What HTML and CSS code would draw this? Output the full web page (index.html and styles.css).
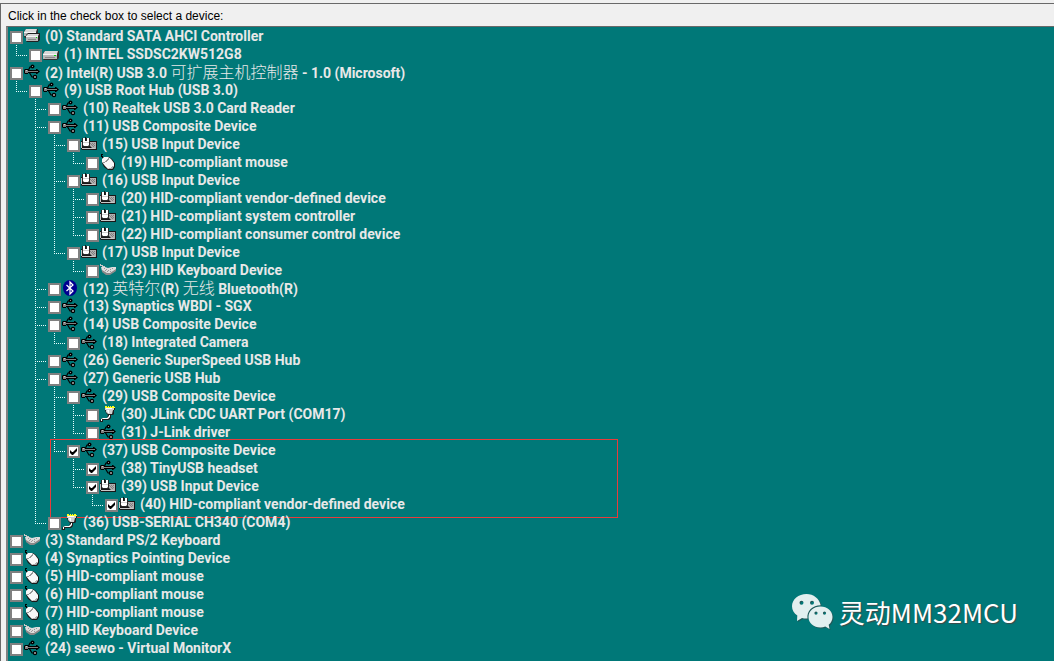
FILE: index.html
```html
<!DOCTYPE html>
<html lang="en">
<head>
<meta charset="utf-8">
<title>Select a device</title>
<link rel="stylesheet" href="styles.css">
</head>
<body>
<svg class="sprite" aria-hidden="true">
  <defs>
    <symbol id="usb" viewBox="0 0 16 16">
      <path d="M4 7L6 3H8M5 8L8 13H10" fill="none" stroke="#000" stroke-width="1.200"/>
      <path d="M1 5H4V6H12V5H13L16 7.500L13 10H12V9H4V10H1L0 9V6Z" fill="#000"/>
      <path d="M1 6H4V9H1ZM4 7H12V8H4ZM12 7H14V8H12Z" fill="#808080"/><path d="M2 6H3V7H2Z" fill="#c8c8c8"/>
      <circle cx="8.500" cy="2.500" r="2" fill="#000"/><path d="M8 2H9V3H8Z" fill="#909090"/>
      <circle cx="11" cy="13" r="2.200" fill="#000"/><path d="M10 12H12V14H10Z" fill="#808080"/>
    </symbol>
    <symbol id="disk" viewBox="0 0 16 16">
      <path d="M0 7L2 5H16V12L14 14H1L0 13Z" fill="#303030"/>
      <path d="M0 8L2 5H15L14 8Z" fill="#d8d8d8"/>
      <path d="M0 8H14V13H0Z" fill="#b8b8b8"/>
      <path d="M0 8H14V9H0Z" fill="#f4f4f4"/><path d="M2 11H12V12H2Z" fill="#888"/>
      <path d="M11 9H13V10H11Z" fill="#00e000"/>
    </symbol>
    <symbol id="disks" viewBox="0 0 16 16">
      <path d="M0 3L2 1H14V8L12 10H1L0 8Z" fill="#303030"/>
      <path d="M0 4L2 1H13L12 4Z" fill="#d8d8d8"/><path d="M0 4H12V8H0Z" fill="#b0b0b0"/><path d="M0 4H12V5H0Z" fill="#f4f4f4"/>
      <path d="M2 7L4 5H16V12L14 14H3L2 13Z" fill="#202020"/>
      <path d="M2 8L4 6H15L14 8Z" fill="#d8d8d8"/><path d="M2 8H14V13H2Z" fill="#b8b8b8"/>
      <path d="M2 8H14V9H2Z" fill="#f4f4f4"/><path d="M4 11H12V12H4Z" fill="#888"/><path d="M12 9H13V10H12Z" fill="#00e000"/>
    </symbol>
    <symbol id="hid" viewBox="0 0 16 16">
      <path d="M0 5H16V14H1L0 13Z" fill="#181818"/>
      <path d="M8 6H15V13H12L8 9Z" fill="#b0b0b0"/><path d="M1 12H14V13H1ZM0 6H1V12H0Z" fill="#c8c8c8"/>
      <path d="M9 7h1v1h-1zM11 7h1v1h-1zM13 7h1v1h-1zM10 8h1v1h-1zM12 8h1v1h-1zM11 9h1v1h-1zM13 9h1v1h-1zM12 10h1v1h-1z" fill="#808080"/>
      <path d="M1 2H9V9L8 11H3L1 9Z" fill="#282828"/>
      <path d="M2 2H4V5H6V2H8V9L7 10H3L2 9Z" fill="#fff"/>
      <path d="M4 1H5V5H4Z" fill="#181818"/><path d="M2 6H8V7H2Z" fill="#d0d0d0"/>
    </symbol>
    <symbol id="mouse" viewBox="0 0 16 16">
      <path d="M1 0H3V1H2V2H3V3H4V4H2V3H1Z" fill="#000"/>
      <path d="M2 5L4 3H9L12 5L15 9V13L13 16H8L4 13L2 9Z" fill="#181818"/>
      <path d="M2 5L4 3H8L11 5L14 9V12L12 15H8L5 12L2 8Z" fill="#f8f8f8"/>
      <path d="M3 8H5V7H6V6H7V5H8V4H9V6H8V7H7V8H5V9H3Z" fill="#989898"/>
      <path d="M8 14H11V13H12V12H14L12 15H9Z" fill="#b0b0b0"/>
    </symbol>
    <symbol id="keyboard" viewBox="0 0 16 16">
      <path d="M0 2H1V3H3V4H5V6H4V5H2V4H0Z" fill="#c8c8c8"/>
      <path d="M1 5H5L8 6L12 5H16V8L14 10L9 12H6L2 9Z" fill="#ddd"/>
      <path d="M2 8L7 11H10L16 7V9L10 13H6L2 10Z" fill="#888"/>
      <path d="M4 6h1v1h-1zM6 7h1v1h-1zM8 8h1v1h-1zM10 7h1v1h-1zM12 6h1v1h-1zM7 9h1v1h-1zM10 9h1v1h-1zM5 8h1v1h-1z" fill="#999"/>
    </symbol>
    <symbol id="serial" viewBox="0 0 16 16">
      <path d="M5 0h2v1h-2zM8 0h1v1h-1zM10 0h1v1h-1zM12 0h2v1h-2zM5 1h10v1h-10z" fill="#ffff20"/>
      <path d="M5 2H15V4H14V8L13 9H11V12L9 14H3V16H0V14L2 12H7L8 9L6 7L5 4Z" fill="#202020"/>
      <path d="M5 2H14V4H13L12 8H8L6 6V4H5Z" fill="#d0d0d0"/><path d="M6 2H12V3H6ZM7 4H9V7H8Z" fill="#fff"/>
      <path d="M9 9H10V11L8 13H2V15H1V13L3 12H7L9 10Z" fill="#fff"/>
    </symbol>
    <symbol id="bluetooth" viewBox="0 0 16 16">
      <ellipse cx="8" cy="8" rx="7" ry="8" fill="#000090"/>
      <path d="M4.500 5L11 11L8 14V2L11 5L4.500 11" fill="none" stroke="#fff" stroke-width="1.200"/>
    </symbol>
  </defs>
</svg>

<main class="panel">
  <h1 class="prompt">Click in the check box to select a device:</h1>
  <div class="tree">
    <ul class="roots">
      <li><label class="node"><input type="checkbox"><svg><use href="#disks"/></svg><span>(0) Standard SATA AHCI Controller</span></label>
        <ul>
          <li><label class="node"><input type="checkbox"><svg><use href="#disk"/></svg><span>(1) INTEL SSDSC2KW512G8</span></label></li>
        </ul>
      </li>
      <li><label class="node"><input type="checkbox"><svg><use href="#usb"/></svg><span>(2) Intel(R) USB 3.0 <span class="cjk" lang="zh">可扩展主机控制器</span> - 1.0 (Microsoft)</span></label>
        <ul>
          <li><label class="node"><input type="checkbox"><svg><use href="#usb"/></svg><span>(9) USB Root Hub (USB 3.0)</span></label>
            <ul>
              <li><label class="node"><input type="checkbox"><svg><use href="#usb"/></svg><span>(10) Realtek USB 3.0 Card Reader</span></label></li>
              <li><label class="node"><input type="checkbox"><svg><use href="#usb"/></svg><span>(11) USB Composite Device</span></label>
                <ul>
                  <li><label class="node"><input type="checkbox"><svg><use href="#hid"/></svg><span>(15) USB Input Device</span></label>
                    <ul>
                      <li><label class="node"><input type="checkbox"><svg><use href="#mouse"/></svg><span>(19) HID-compliant mouse</span></label></li>
                    </ul>
                  </li>
                  <li><label class="node"><input type="checkbox"><svg><use href="#hid"/></svg><span>(16) USB Input Device</span></label>
                    <ul>
                      <li><label class="node"><input type="checkbox"><svg><use href="#hid"/></svg><span>(20) HID-compliant vendor-defined device</span></label></li>
                      <li><label class="node"><input type="checkbox"><svg><use href="#hid"/></svg><span>(21) HID-compliant system controller</span></label></li>
                      <li><label class="node"><input type="checkbox"><svg><use href="#hid"/></svg><span>(22) HID-compliant consumer control device</span></label></li>
                    </ul>
                  </li>
                  <li><label class="node"><input type="checkbox"><svg><use href="#hid"/></svg><span>(17) USB Input Device</span></label>
                    <ul>
                      <li><label class="node"><input type="checkbox"><svg><use href="#keyboard"/></svg><span>(23) HID Keyboard Device</span></label></li>
                    </ul>
                  </li>
                </ul>
              </li>
              <li><label class="node"><input type="checkbox"><svg><use href="#bluetooth"/></svg><span>(12) <span class="cjk" lang="zh">英特尔</span>(R) <span class="cjk" lang="zh">无线</span> Bluetooth(R)</span></label></li>
              <li><label class="node"><input type="checkbox"><svg><use href="#usb"/></svg><span>(13) Synaptics WBDI - SGX</span></label></li>
              <li><label class="node"><input type="checkbox"><svg><use href="#usb"/></svg><span>(14) USB Composite Device</span></label>
                <ul>
                  <li><label class="node"><input type="checkbox"><svg><use href="#usb"/></svg><span>(18) Integrated Camera</span></label></li>
                </ul>
              </li>
              <li><label class="node"><input type="checkbox"><svg><use href="#usb"/></svg><span>(26) Generic SuperSpeed USB Hub</span></label></li>
              <li><label class="node"><input type="checkbox"><svg><use href="#usb"/></svg><span>(27) Generic USB Hub</span></label>
                <ul>
                  <li><label class="node"><input type="checkbox"><svg><use href="#usb"/></svg><span>(29) USB Composite Device</span></label>
                    <ul>
                      <li><label class="node"><input type="checkbox"><svg><use href="#serial"/></svg><span>(30) JLink CDC UART Port (COM17)</span></label></li>
                      <li><label class="node"><input type="checkbox"><svg><use href="#usb"/></svg><span>(31) J-Link driver</span></label></li>
                    </ul>
                  </li>
                  <li><label class="node"><input type="checkbox" checked><svg><use href="#usb"/></svg><span>(37) USB Composite Device</span></label>
                    <ul>
                      <li><label class="node"><input type="checkbox" checked><svg><use href="#usb"/></svg><span>(38) TinyUSB headset</span></label></li>
                      <li><label class="node"><input type="checkbox" checked><svg><use href="#hid"/></svg><span>(39) USB Input Device</span></label>
                        <ul>
                          <li><label class="node"><input type="checkbox" checked><svg><use href="#hid"/></svg><span>(40) HID-compliant vendor-defined device</span></label></li>
                        </ul>
                      </li>
                    </ul>
                    <div class="highlight"></div>
                  </li>
                </ul>
              </li>
              <li><label class="node"><input type="checkbox"><svg><use href="#serial"/></svg><span>(36) USB-SERIAL CH340 (COM4)</span></label></li>
            </ul>
          </li>
        </ul>
      </li>
      <li><label class="node"><input type="checkbox"><svg><use href="#keyboard"/></svg><span>(3) Standard PS/2 Keyboard</span></label></li>
      <li><label class="node"><input type="checkbox"><svg><use href="#mouse"/></svg><span>(4) Synaptics Pointing Device</span></label></li>
      <li><label class="node"><input type="checkbox"><svg><use href="#mouse"/></svg><span>(5) HID-compliant mouse</span></label></li>
      <li><label class="node"><input type="checkbox"><svg><use href="#mouse"/></svg><span>(6) HID-compliant mouse</span></label></li>
      <li><label class="node"><input type="checkbox"><svg><use href="#mouse"/></svg><span>(7) HID-compliant mouse</span></label></li>
      <li><label class="node"><input type="checkbox"><svg><use href="#keyboard"/></svg><span>(8) HID Keyboard Device</span></label></li>
      <li><label class="node"><input type="checkbox"><svg><use href="#usb"/></svg><span>(24) seewo - Virtual MonitorX</span></label></li>
    </ul>
    <div class="watermark">
      <svg viewBox="0 0 41 36" aria-hidden="true">
        <path fill="#e2efef" fill-rule="evenodd" d="M14.500 0C6.500 0 0 5.400 0 12.200C0 16 2 19.200 5.300 21.500L5 27L10 24C12 24.600 14 24.700 15.500 24.500C14.500 16.500 20.500 11.500 28.700 11.200C27.500 4.800 21.500 0 14.500 0ZM9.500 6.800A2 2 0 1 1 9.500 10.800A2 2 0 1 1 9.500 6.800ZM20 6.800A2 2 0 1 1 20 10.800A2 2 0 1 1 20 6.800Z"/>
        <path fill="#e2efef" fill-rule="evenodd" d="M28.500 12.500C21.700 12.500 16.500 17 16.500 23S21.700 33.500 28.500 33.500C30.200 33.500 31.900 33.200 33.300 32.600L37.500 35L36.700 30.700C39.100 28.900 40.500 26.200 40.500 23C40.500 17 35.300 12.500 28.500 12.500ZM24 17.500A1.600 1.600 0 1 1 24 20.700A1.600 1.600 0 1 1 24 17.500ZM32.500 17.500A1.600 1.600 0 1 1 32.500 20.700A1.600 1.600 0 1 1 32.500 17.500Z"/>
      </svg>
      <span lang="zh">灵动MM32MCU</span>
    </div>
  </div>
</main>
</body>
</html>
```
FILE: styles.css
```css
* {
  box-sizing: border-box;
}

body {
  margin: 0;
  padding-top: 3px;
  background: #f0f0f0;
  overflow: hidden;
}

.sprite {
  position: absolute;
  width: 0;
  height: 0;
}

.panel {
  display: flex;
  flex-direction: column;
  min-height: calc(100vh - 3px);
  padding-left: 5px;
  border-top: 1px solid #696969;
  border-left: 1px solid #696969;
}

.prompt {
  margin: 0;
  padding: 6px 2px 3px;
  font: 400 12px/13px "Liberation Sans", Arial, sans-serif;
  color: #000;
}

.tree {
  position: relative;
  flex: 1;
  border-top: 1px solid #696969;
  border-left: 2px solid #808080;
  background: #007878;
  color: #e8e8e8;
  font: 700 14px/18px Roboto, "Noto Sans CJK SC", sans-serif;
  white-space: nowrap;
}

.tree ul {
  margin: 0;
  padding: 0 0 0 19px;
  list-style: none;
}

.tree .roots {
  padding-left: 0;
}

.tree li {
  position: relative;
}

.tree li li::before,
.tree li li::after {
  content: "";
  position: absolute;
  left: -11px;
}

.tree li li::before {
  top: 0;
  width: 1px;
  height: 100%;
  background: repeating-linear-gradient(#e8ffff 0 1px, transparent 1px 2px);
}

.tree li li:last-child::before {
  height: 11px;
}

.tree li li::after {
  top: 10px;
  width: 12px;
  height: 1px;
  background: repeating-linear-gradient(90deg, #e8ffff 0 1px, transparent 1px 2px);
}

.node {
  display: flex;
  align-items: center;
  height: 18px;
  padding-left: 2px;
}

.node input {
  appearance: none;
  width: 13px;
  height: 13px;
  margin: 3px 1px 0 0;
  border: 2px solid #808080;
  background: #fff;
}

.node input:checked {
  background: #fff url("data:image/svg+xml,%3Csvg xmlns='http://www.w3.org/2000/svg' viewBox='0 0 9 9'%3E%3Cpath d='M1 3v3l2 2h1l4-4V1L4 5H3z' fill='%23000'/%3E%3C/svg%3E") center / 9px 9px no-repeat;
}

.node svg {
  width: 16px;
  height: 16px;
  margin-right: 5px;
}

.cjk {
  font: 300 16px/16px "Noto Sans CJK SC", sans-serif;
}

.highlight {
  position: absolute;
  top: -2px;
  bottom: -5px;
  left: -15px;
  width: 568px;
  border: 1px solid #e83c3c;
  pointer-events: none;
}

.watermark {
  position: absolute;
  right: 36px;
  bottom: 31px;
  display: flex;
  align-items: center;
  gap: 6px;
  font: 400 26px/36px "Noto Sans CJK SC", sans-serif;
  color: #fff;
  text-shadow: 1px 1px 1px #404848;
}

.watermark svg {
  width: 41px;
  height: 36px;
  filter: drop-shadow(1px 1px 0 #205858);
}
```
